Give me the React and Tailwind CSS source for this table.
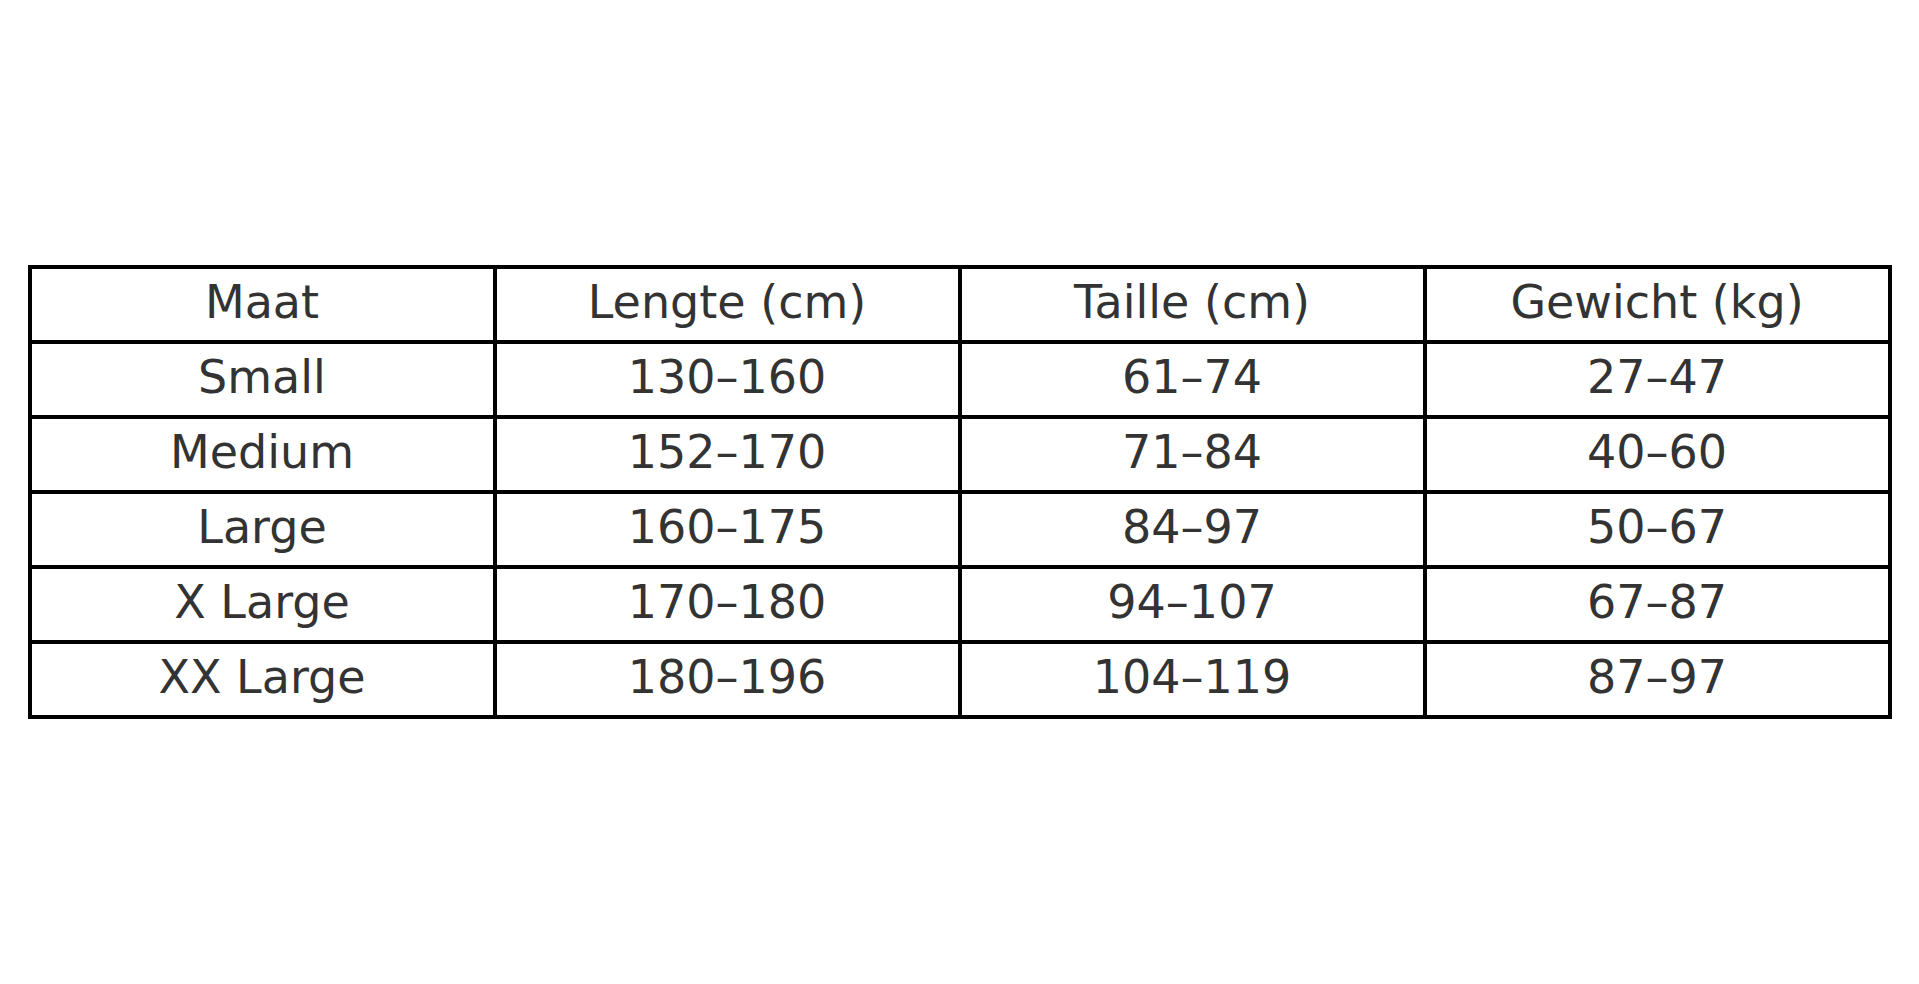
const headers = ["Maat", "Lengte (cm)", "Taille (cm)", "Gewicht (kg)"];

const rows = [
  ["Small", "130–160", "61–74", "27–47"],
  ["Medium", "152–170", "71–84", "40–60"],
  ["Large", "160–175", "84–97", "50–67"],
  ["X Large", "170–180", "94–107", "67–87"],
  ["XX Large", "180–196", "104–119", "87–97"],
];

function Row({ cells, first }) {
  return (
    <div className={first ? "flex" : "flex border-t-4 border-black"}>
      {cells.map((c, i) => (
        <div
          key={i}
          className={
            "flex h-[71px] items-center justify-center pb-1 " +
            (i === 0 ? "w-[461px]" : "w-[465px] border-l-4 border-black")
          }
        >
          {c}
        </div>
      ))}
    </div>
  );
}

export default function App() {
  return (
    <div className="flex h-[984px] w-full items-center justify-center bg-white">
      <div
        className="w-[1864px] border-4 border-black text-[46px] text-[#333333]"
        style={{ fontFamily: '"DejaVu Sans", sans-serif' }}
      >
        <Row cells={headers} first />
        {rows.map((r, i) => (
          <Row key={i} cells={r} />
        ))}
      </div>
    </div>
  );
}
